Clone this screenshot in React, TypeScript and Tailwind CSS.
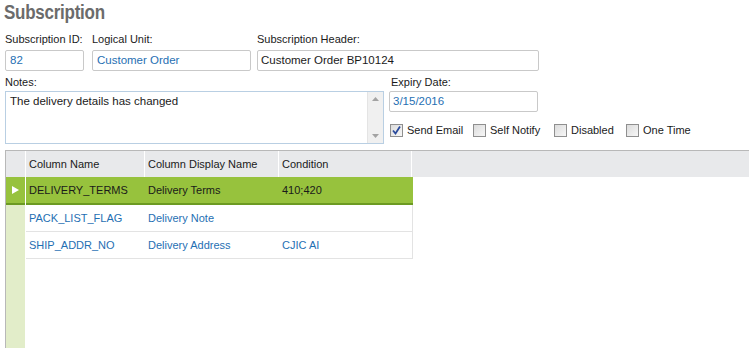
import React from "react";

const rows = [
  { name: "DELIVERY_TERMS", display: "Delivery Terms", condition: "410;420", selected: true },
  { name: "PACK_LIST_FLAG", display: "Delivery Note", condition: "", selected: false },
  { name: "SHIP_ADDR_NO", display: "Delivery Address", condition: "CJIC AI", selected: false },
];

function Checkbox({ checked, label, width }: { checked?: boolean; label: string; width: string }) {
  return (
    <label className={`flex items-center gap-[4px] ${width}`}>
      <span className="w-[13px] h-[13px] border border-[#8f8f8f] bg-gradient-to-br from-[#dcdcdc] to-[#f7f7f7] flex items-center justify-center">
        {checked && (
          <svg width="11" height="11" viewBox="0 0 11 11">
            <path d="M2 5.5 L4.5 8.5 L9 1.5" fill="none" stroke="#2a4a9c" strokeWidth="1.8" />
          </svg>
        )}
      </span>
      <span className="text-[11px] text-[#1a1a1a] whitespace-nowrap">{label}</span>
    </label>
  );
}

export default function App() {
  return (
    <div className="h-[348px] w-[749px] overflow-hidden bg-white flex flex-col font-['Liberation_Sans',Arial,sans-serif]">
      <h1 className="ml-[4px] h-[26px] leading-[24px] text-[20px] font-bold text-[#6b6b6b] tracking-[-0.3px] origin-left scale-x-[0.85] whitespace-nowrap">
        Subscription
      </h1>

      {/* first row */}
      <div className="flex mt-[7px] text-[11px] text-[#1a1a1a]">
        <div className="ml-[5px] w-[79px] flex flex-col">
          <span className="h-[17px] leading-[13px] whitespace-nowrap">Subscription ID:</span>
          <div className="h-[21px] border border-[#c9c9c9] rounded-[2px] px-[4px] leading-[19px] text-[11.5px] text-[#1f6fb3]">82</div>
        </div>
        <div className="ml-[8px] w-[159px] flex flex-col">
          <span className="h-[17px] leading-[13px] whitespace-nowrap">Logical Unit:</span>
          <div className="h-[21px] border border-[#c9c9c9] rounded-[2px] px-[4px] leading-[19px] text-[11.5px] text-[#1f6fb3]">Customer Order</div>
        </div>
        <div className="ml-[6px] w-[282px] flex flex-col">
          <span className="h-[17px] leading-[13px] whitespace-nowrap">Subscription Header:</span>
          <div className="h-[21px] border border-[#c9c9c9] rounded-[2px] px-[3px] leading-[19px] text-[11.5px]">Customer Order BP10124</div>
        </div>
      </div>

      {/* second row */}
      <div className="flex mt-[5px] text-[11px] text-[#1a1a1a]">
        <div className="ml-[5px] w-[379px] flex flex-col">
          <span className="h-[15px] leading-[13px]">Notes:</span>
          <div className="h-[53px] border border-[#b9cfe3] flex">
            <div className="flex-1 px-[4px] pt-[1px] leading-[16px] text-[11.5px]">The delivery details has changed</div>
            <div className="w-[16px] bg-[#f0f0f0] border-l border-[#e4e4e4] flex flex-col justify-between items-center py-[5px]">
              <svg width="7" height="4" viewBox="0 0 7 4"><path d="M0 4 L3.5 0 L7 4 Z" fill="#a3a3a3" /></svg>
              <svg width="7" height="4" viewBox="0 0 7 4"><path d="M0 0 L3.5 4 L7 0 Z" fill="#a3a3a3" /></svg>
            </div>
          </div>
        </div>
        <div className="ml-[5px] flex flex-col">
          <span className="h-[15px] leading-[13px] ml-[2px]">Expiry Date:</span>
          <div className="w-[149px] h-[21px] border border-[#c9c9c9] rounded-[2px] px-[3px] leading-[19px] text-[11.5px] text-[#1f6fb3]">3/15/2016</div>
          <div className="flex mt-[10px] ml-[1px]">
            <Checkbox checked label="Send Email" width="w-[83px]" />
            <Checkbox label="Self Notify" width="w-[81px]" />
            <Checkbox label="Disabled" width="w-[72px]" />
            <Checkbox label="One Time" width="w-[80px]" />
          </div>
        </div>
      </div>

      {/* grid */}
      <div className="mt-[6px] ml-[5px] flex-1 flex border-t border-l border-[#b8b8b8] text-[11px]">
        <div className="w-[19px] flex flex-col">
          <div className="h-[26px] bg-[#e8e9eb]" />
          <div className="h-[28px] bg-[#97c23d] border-b-2 border-[#6c9a22] flex items-center justify-center">
            <svg width="7" height="8" viewBox="0 0 7 8"><path d="M0 0 L7 4 L0 8 Z" fill="#ffffff" /></svg>
          </div>
          <div className="flex-1 bg-[#e2edc9]" />
        </div>
        <div className="flex-1 flex flex-col border-l border-white">
          <div className="h-[26px] flex bg-[#e8e9eb] text-[#1a1a1a]">
            <div className="w-[119px] pl-[3px] leading-[26px] border-r border-white">Column Name</div>
            <div className="w-[134px] pl-[3px] leading-[26px] border-r border-white">Column Display Name</div>
            <div className="w-[133px] pl-[3px] leading-[26px] border-r border-white">Condition</div>
            <div className="flex-1" />
          </div>
          {rows.map((r) => (
            <div
              key={r.name}
              className={
                r.selected
                  ? "w-[387px] h-[28px] flex bg-[#97c23d] border-b-2 border-[#6c9a22] text-[#1a1a1a]"
                  : "w-[387px] h-[27px] flex border-b border-r border-[#e3e3e3] text-[#1f6fb3]"
              }
            >
              <div className="w-[119px] pl-[3px] leading-[26px]">{r.name}</div>
              <div className="w-[134px] pl-[3px] leading-[26px]">{r.display}</div>
              <div className="w-[133px] pl-[3px] leading-[26px]">{r.condition}</div>
            </div>
          ))}
        </div>
      </div>
    </div>
  );
}
